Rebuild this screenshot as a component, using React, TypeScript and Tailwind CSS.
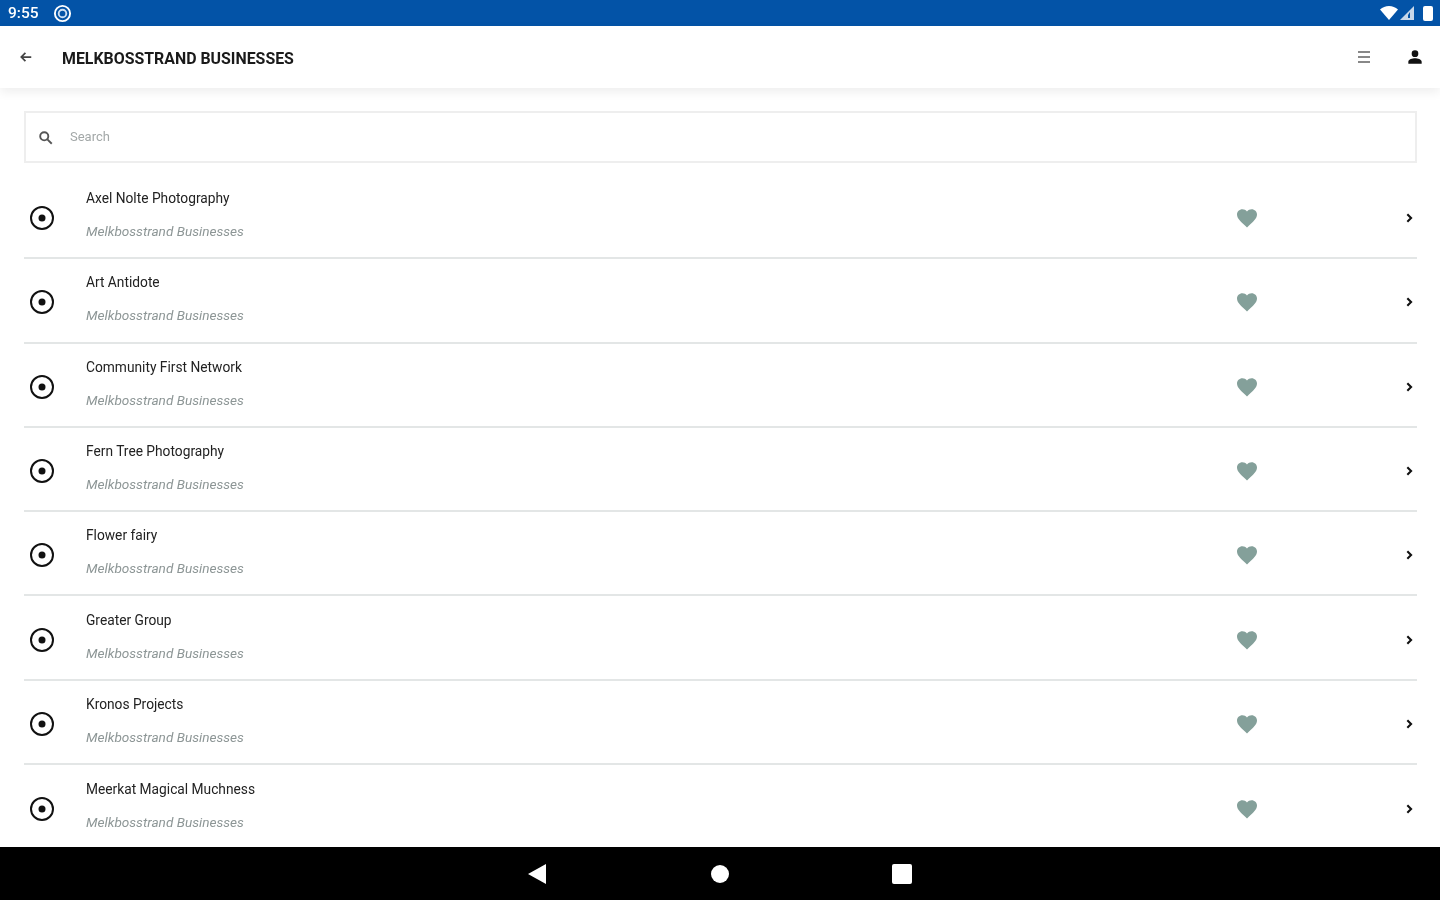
const NAMES = [
  "Axel Nolte Photography",
  "Art Antidote",
  "Community First Network",
  "Fern Tree Photography",
  "Flower fairy",
  "Greater Group",
  "Kronos Projects",
  "Meerkat Magical Muchness",
];

function Row({ name, last }: { name: string; last: boolean }) {
  return (
    <div className={`flex h-[84.3px] shrink-0 items-center border-[#e3e6e6] pr-[1px] pt-[4px] ${last ? "" : "border-b-2"}`}>
      <svg viewBox="0 0 24 24" className="ml-[6px] h-6 w-6 shrink-0">
        <circle cx="12" cy="12" r="11" fill="none" stroke="#111" strokeWidth="2" />
        <circle cx="12" cy="12" r="3.500" fill="#111" />
      </svg>
      <div className="ml-[32px] flex h-full min-w-0 flex-1 flex-col justify-center gap-[16px] pb-[6px]">
        <div className="text-[13.750px] leading-[17px] text-[#222]">{name}</div>
        <div className="text-[13.600px] italic leading-[17px] text-[#8d9696]">Melkbosstrand Businesses</div>
      </div>
      <svg viewBox="0 0 24 24" className="mr-[145px] h-[24px] w-[24px] shrink-0 fill-[#84a09a]">
        <path d="M12 21.500l-1.500-1.400C5.200 15.300 2 12.300 2 8.600 2 5.600 4.400 3.300 7.400 3.300c1.800 0 3.500.8 4.600 2.100 1.100-1.300 2.800-2.100 4.600-2.100 3 0 5.400 2.300 5.400 5.300 0 3.700-3.200 6.700-8.500 11.500L12 21.500z" />
      </svg>
      <svg viewBox="0 0 24 24" className="mr-[2px] h-[10px] w-[10px] shrink-0 fill-none stroke-[#111] stroke-[5]">
        <path d="M8 3l9 9-9 9" />
      </svg>
    </div>
  );
}

export default function App() {
  return (
    <div className="flex h-[900px] w-[1440px] flex-col overflow-hidden bg-white font-['Roboto',sans-serif] blur-[0.7px]">
      <div className="flex h-[26px] shrink-0 items-center justify-between bg-[#0353a7] pl-[8px] pr-[7px] text-white">
        <div className="flex items-center gap-[14px]">
          <span className="pt-[2px] text-[15.500px] font-medium leading-none">9:55</span>
          <svg viewBox="0 0 20 20" className="h-[19px] w-[19px]">
            <circle cx="10" cy="10" r="8" fill="none" stroke="#fff" strokeWidth="2" />
            <circle cx="10" cy="10" r="4" fill="none" stroke="#cfe0f2" strokeWidth="2" />
          </svg>
        </div>
        <div className="flex items-center gap-[2px]">
          <svg viewBox="0 0 18 14" className="h-[14px] w-[18px] fill-white">
            <path d="M0 3.500C2.500 1.300 5.600 0 9 0s6.500 1.300 9 3.500L9 14 0 3.500z" />
          </svg>
          <svg viewBox="0 0 14 14" className="h-[14px] w-[14px]">
            <path d="M0 14L14 0v14H0z" fill="#c9d8ea" />
            <path d="M8 9l2-3v6H8V9z" fill="#0353a7" />
          </svg>
          <div className="ml-[7px] h-[15px] w-[10px] rounded-[2px] bg-white" />
        </div>
      </div>

      <div className="relative z-10 flex h-[62px] shrink-0 items-center bg-white pl-[19px] pr-[17px] shadow-[0_4px_10px_rgba(0,0,0,0.07)]">
        <svg viewBox="0 0 24 24" className="h-[14px] w-[14px] fill-none stroke-[#444] stroke-[3]">
          <path d="M21 12H4M11 5l-7 7 7 7" />
        </svg>
        <div className="ml-[29px] flex-1 pt-[3px] text-[15.900px] font-bold leading-none text-[#1a1a1a]">MELKBOSSTRAND BUSINESSES</div>
        <div className="mr-[37px] flex flex-col gap-[3px]">
          <div className="h-[2px] w-[12px] bg-[#888]" />
          <div className="h-[2px] w-[12px] bg-[#888]" />
          <div className="h-[2px] w-[12px] bg-[#888]" />
        </div>
        <svg viewBox="0 0 24 24" className="h-[16px] w-[16px] fill-[#111]">
          <path d="M12 12a5 5 0 1 0 0-10 5 5 0 0 0 0 10zm0 2c-3.500 0-10 1.700-10 5v3h20v-3c0-3.300-6.500-5-10-5z" />
        </svg>
      </div>

      <div className="flex min-h-0 flex-1 flex-col pl-[24px] pr-[23px] pt-[23px]">
        <div className="flex h-[52px] shrink-0 items-center border-2 border-[#eeeeee] bg-white pl-[12px]">
          <svg viewBox="0 0 24 24" className="h-[15px] w-[15px] fill-none stroke-[#555] stroke-[3]">
            <circle cx="10" cy="10" r="6.500" />
            <path d="M15 15l7 7" />
          </svg>
          <span className="ml-[17px] pb-[2px] text-[13px] leading-none text-[#a3a8a8]">Search</span>
        </div>
        <div className="mt-[12px] flex min-h-0 flex-1 flex-col overflow-hidden">
          {NAMES.map((n, i) => (
            <Row key={n} name={n} last={i === NAMES.length - 1} />
          ))}
        </div>
      </div>

      <div className="flex h-[53px] shrink-0 items-center justify-center bg-black">
        <svg viewBox="0 0 18 20" className="h-[20px] w-[18px] fill-white">
          <path d="M0 10L18 0v20L0 10z" />
        </svg>
        <div className="ml-[165px] h-[18px] w-[18px] rounded-full bg-white" />
        <div className="ml-[163px] h-[20px] w-[20px] rounded-[2px] bg-white" />
      </div>
    </div>
  );
}
